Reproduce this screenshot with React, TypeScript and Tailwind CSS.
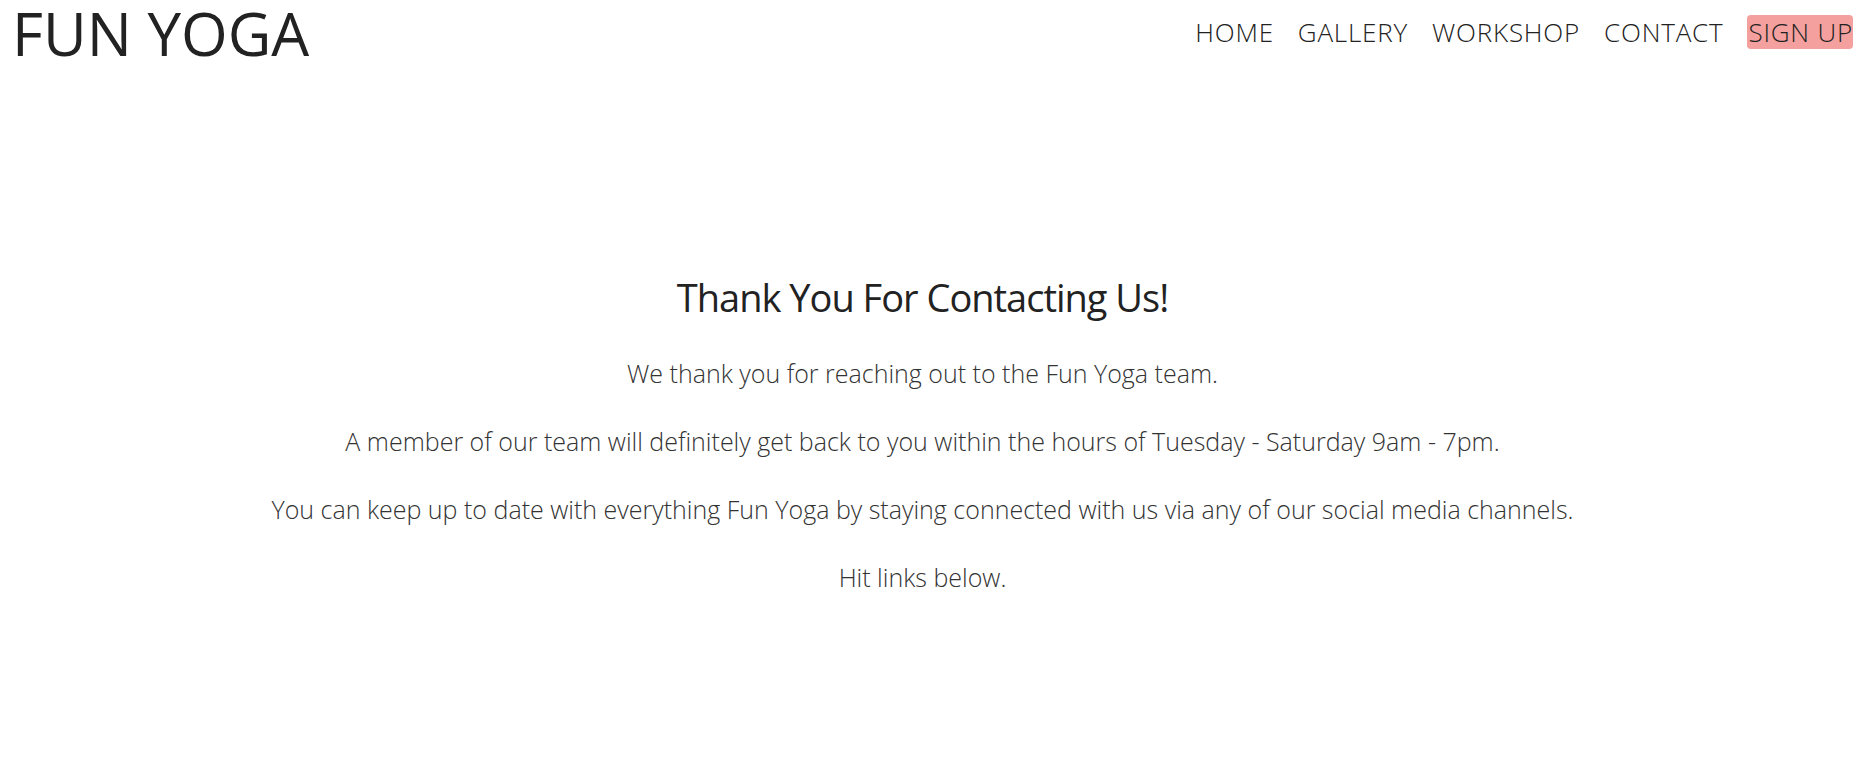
export default function App() {
  const links = ["HOME", "GALLERY", "WORKSHOP", "CONTACT"];

  return (
    <div className="min-h-[762px] bg-white font-['Open_Sans',sans-serif] text-[#222]">
      <header className="flex items-start justify-between pl-[12px] pr-[11px]">
        <a href="#" className="mt-[1px] text-[60px] font-normal leading-[64px] text-[#222]">
          FUN YOGA
        </a>
        <nav className="mt-[15px] flex items-center gap-[24px] text-[26px] font-light leading-[34px] tracking-[0.8px] text-[#222]">
          {links.map((l) => (
            <a key={l} href="#">
              {l}
            </a>
          ))}
          <a href="#" className="rounded-[4px] bg-[#f4a09e] pl-[1px]">
            SIGN UP
          </a>
        </nav>
      </header>

      <main className="pr-[19px] pt-[210px] text-center">
        <h1 className="text-[38px] font-normal leading-[1.2] tracking-[-1px] text-[#222]">
          Thank You For Contacting Us!
        </h1>
        <div className="mt-[33px] flex flex-col gap-[30px] text-[25px] font-light leading-[38px] text-[#333]">
          <p>We thank you for reaching out to the Fun Yoga team.</p>
          <p>
            A member of our team will definitely get back to you within the hours of Tuesday - Saturday 9am - 7pm.
          </p>
          <p>
            You can keep up to date with everything Fun Yoga by staying connected with us via any of our social media
            channels.
          </p>
          <p>Hit links below.</p>
        </div>
      </main>
    </div>
  );
}
